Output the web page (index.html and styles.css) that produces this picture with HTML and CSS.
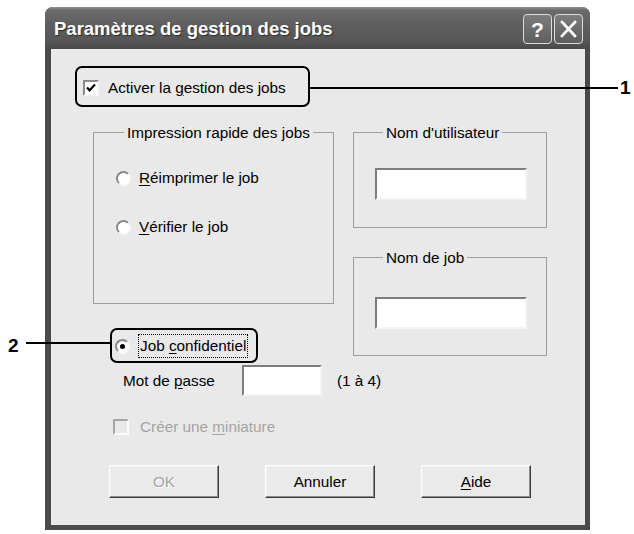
FILE: index.html
```html
<!DOCTYPE html>
<html lang="fr">
<head>
<meta charset="utf-8">
<title>Paramètres de gestion des jobs</title>
<link rel="stylesheet" href="styles.css">
</head>
<body>
<div class="window">
  <div class="titlebar">
    <span class="title">Paramètres de gestion des jobs</span>
    <span class="tbtn help">?</span>
    <span class="tbtn close"><svg width="29" height="30" viewBox="0 0 29 30"><path d="M8 8 L21 22 M21 8 L8 22" stroke="#fff" stroke-width="2.6" stroke-linecap="square" fill="none"/></svg></span>
  </div>
  <div class="client">
    <div class="row-activer">
      <span class="chk"><svg width="12" height="12" viewBox="0 0 12 12"><path d="M2 5.5 L4.6 8.3 L10 2.6" stroke="#000" stroke-width="2.2" fill="none"/></svg></span>
      <span>Activer la <u>g</u>estion des jobs</span>
    </div>
    <div class="main">
      <div class="leftcol">
        <fieldset class="grp grp-quick">
          <legend>Impression rapide des jobs</legend>
          <div class="radio-row r1"><span class="radio"></span><span><u>R</u>éimprimer le job</span></div>
          <div class="radio-row r2"><span class="radio"></span><span><u>V</u>érifier le job</span></div>
        </fieldset>
        <div class="conf-row"><span class="radio on"></span><span class="focus">Job <u>c</u>onfidentiel</span></div>
        <div class="pw-row"><span class="pw-label">Mot de <u>p</u>asse</span><span class="input pw"></span><span class="pw-hint">(1 à 4)</span></div>
      </div>
      <div class="rightcol">
        <fieldset class="grp grp-user"><legend>Nom d'utilisateur</legend><span class="input name"></span></fieldset>
        <fieldset class="grp grp-job"><legend>Nom de job</legend><span class="input name"></span></fieldset>
      </div>
    </div>
    <div class="row-mini"><span class="chk dis"></span><span>Créer une <u>m</u>iniature</span></div>
    <div class="buttons">
      <span class="btn disabled">OK</span>
      <span class="btn">Annuler</span>
      <span class="btn"><u>A</u>ide</span>
    </div>
  </div>
</div>
<div class="callout c1"></div>
<div class="cline l1"></div>
<div class="num n1">1</div>
<div class="callout c2"></div>
<div class="cline l2"></div>
<div class="num n2">2</div>
</body>
</html>
```
FILE: styles.css
```css
* { box-sizing: border-box; }
html, body { margin: 0; padding: 0; }
body {
  width: 634px;
  height: 534px;
  background: #fff;
  position: relative;
  overflow: hidden;
  font-family: "Liberation Sans", Arial, sans-serif;
  font-size: 15.3px;
  color: #000;
}
.window {
  margin: 7px 0 0 45px;
  width: 545px;
  height: 523px;
  background: #4a4a4a;
  border-radius: 8px 8px 0 0;
  display: flex;
  flex-direction: column;
}
.titlebar {
  height: 42px;
  flex: none;
  display: flex;
  align-items: center;
  gap: 2px;
  padding: 2px 7px 0 9px;
  border-radius: 8px 8px 0 0;
  background: linear-gradient(to bottom, #909090 0px, #6c6c6c 3px, #5f5f5f 40%, #555 85%, #484848 100%);
}
.title {
  flex: 1;
  color: #fff;
  font-weight: bold;
  font-size: 18.5px;
  text-shadow: 1px 1px 1px #2e2e2e;
  white-space: nowrap;
}
.tbtn {
  width: 29px;
  height: 30px;
  border: 1px solid #dcdcdc;
  border-radius: 4px;
  background: linear-gradient(to bottom, #7c7c7c, #5e5e5e);
  color: #fff;
  display: flex;
  align-items: center;
  justify-content: center;
  font-weight: bold;
  font-size: 21px;
  line-height: 1;
  overflow: hidden;
}
.tbtn svg { flex: none; }
.client {
  flex: 1;
  margin: 0 5px 5px 6px;
  background: #e9e9e9;
  display: flex;
  flex-direction: column;
  white-space: nowrap;
}
.row-activer {
  display: flex;
  align-items: center;
  height: 18px;
  margin-top: 30px;
  padding-left: 32px;
  gap: 9px;
}
.chk {
  width: 16px;
  height: 16px;
  flex: none;
  background: #fff;
  border: 2px solid;
  border-color: #8a8a8a #f6f6f6 #f6f6f6 #8a8a8a;
  display: flex;
  align-items: center;
  justify-content: center;
}
.chk.dis { background: #e9e9e9; border-color: #a6a6a6 #fbfbfb #fbfbfb #a6a6a6; }
.main {
  display: grid;
  grid-template-columns: 241px 194px;
  column-gap: 19px;
  align-items: start;
  margin-top: 27px;
  padding-left: 42px;
}
.leftcol { min-width: 0; }
.grp {
  margin: 0;
  padding: 0;
  min-width: 0;
  border: 1px solid #9d9d9d;
}
.grp legend {
  padding: 0 3px;
  margin-left: 8px;
  line-height: 17px;
}
.grp-quick { height: 180px; padding-left: 22px; }
.radio-row {
  display: flex;
  align-items: center;
  height: 18px;
  gap: 8px;
}
.r1 { margin-top: 28px; }
.r2 { margin-top: 31px; }
.radio {
  width: 15px;
  height: 15px;
  flex: none;
  border-radius: 50%;
  background: #fff;
  border: 2px solid;
  border-color: #8a8a8a #f8f8f8 #f8f8f8 #8a8a8a;
  display: flex;
  align-items: center;
  justify-content: center;
}
.radio.on::after {
  content: "";
  width: 5px;
  height: 5px;
  border-radius: 50%;
  background: #000;
}
.rightcol { display: flex; flex-direction: column; }
.grp-user { height: 104px; padding-left: 21px; }
.grp-job { height: 107px; margin-top: 21px; padding-left: 21px; }
.input {
  display: block;
  background: #fff;
  border: 2px solid;
  border-color: #7d7d7d #f4f4f4 #f4f4f4 #7d7d7d;
}
.input.name { width: 152px; height: 32px; }
.grp-user .input { margin-top: 27px; }
.grp-job .input { margin-top: 31px; }
.conf-row {
  display: flex;
  align-items: center;
  height: 24px;
  margin-top: 30px;
  padding-left: 22px;
  gap: 8px;
}
.focus {
  border: 1px dotted #000;
  padding: 0 1px;
  line-height: 22px;
}
.pw-row {
  display: flex;
  align-items: center;
  height: 31px;
  margin-top: 7px;
  padding-left: 30px;
}
.pw-label { width: 119px; flex: none; }
.input.pw { width: 80px; height: 31px; flex: none; }
.pw-hint { margin-left: 15px; flex: none; }
.row-mini {
  display: flex;
  align-items: center;
  height: 17px;
  margin-top: 22px;
  padding-left: 62px;
  gap: 11px;
  color: #a4a4a4;
}
.buttons {
  display: flex;
  gap: 46px;
  margin-top: 30px;
  padding-left: 58px;
}
.btn {
  width: 110px;
  height: 33px;
  display: flex;
  align-items: center;
  justify-content: center;
  background: #eaeaea;
  border: 1px solid;
  border-color: #fdfdfd #3c3c3c #3c3c3c #fdfdfd;
  box-shadow: inset -1px -1px 0 #8c8c8c, inset 1px 1px 0 #f2f2f2;
}
.btn.disabled { color: #a4a4a4; text-shadow: 1px 1px 0 #fff; }
u { text-underline-offset: 2px; }
.callout {
  position: absolute;
  border: 2.5px solid #000;
  border-radius: 7px;
}
.c1 { left: 75px; top: 66px; width: 235px; height: 41px; }
.c2 { left: 110px; top: 328px; width: 148px; height: 35px; }
.cline { position: absolute; height: 2px; background: #000; }
.l1 { left: 310px; top: 87px; width: 308px; }
.l2 { left: 26px; top: 342px; width: 84px; }
.num {
  position: absolute;
  font-weight: bold;
  font-size: 19px;
  line-height: 20px;
}
.n1 { left: 620px; top: 78px; }
.n2 { left: 8px; top: 336px; }
```
